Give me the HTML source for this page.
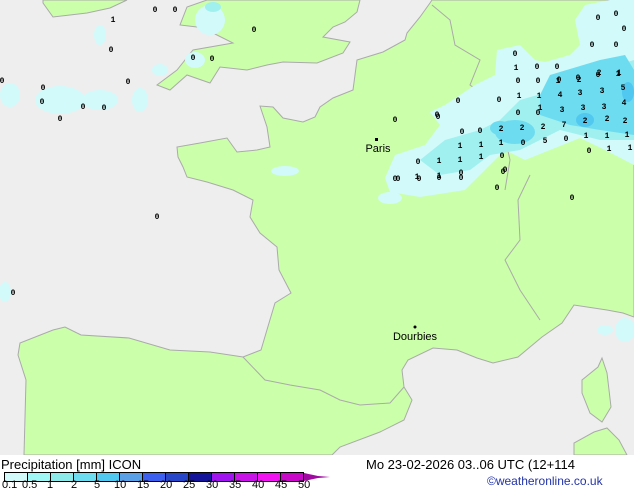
<!DOCTYPE html>
<html><head><meta charset="utf-8"><style>
html,body{margin:0;padding:0;background:#fff;width:634px;height:490px;overflow:hidden;font-family:"Liberation Sans",sans-serif}
.lg{position:absolute;font-size:13px;color:#000;white-space:nowrap}
</style></head><body>
<svg width="634" height="455" style="position:absolute;left:0;top:0" xmlns="http://www.w3.org/2000/svg">
<rect width="634" height="455" fill="#eeeeee"/>
<g fill="#ccffaa" stroke="#aaaaaa" stroke-width="1">
<polygon points="43,0 127,0 110,8 87,13 53,17 43,3"/>
<polygon points="207,0 360,0 357,12 345,22 333,27 323,37 350,42 343,53 317,63 283,62 267,65 247,70 220,67 210,83 187,75 170,90 157,85 177,70 193,50 233,43 213,33 197,27 180,25 187,7"/>
<polygon points="432,0 634,0 634,317 623,313 607,310 574,305 562,323 542,337 518,357 493,363 477,358 457,350 433,348 408,360 402,370 404,387 412,400 404,420 380,432 340,447 332,455 24,455 26,380 18,355 20,343 53,330 65,327 81,335 129,338 170,350 210,352 243,357 261,350 269,323 275,303 291,293 279,270 277,247 260,233 250,217 253,200 233,190 207,182 187,177 183,167 178,157 177,147 200,143 227,138 237,152 257,150 270,147 267,127 260,106 273,107 283,118 303,122 315,117 320,107 333,98 353,90 357,60 383,52 405,40 407,33 420,17 430,3"/>
<polygon points="602,358 607,373 611,407 602,422 590,413 582,393 582,380 598,367"/>
<polygon points="607,428 619,440 627,455 574,455 574,443 594,432"/>
</g>
<g fill="none" stroke="#aaaaaa" stroke-width="1">
<polyline points="432,5 450,20 455,45 480,60 470,85 490,100 500,115 510,160 505,190"/>
<polyline points="243,357 265,380 290,385 320,390 340,400 360,405 390,403 404,387"/>
<polyline points="530,175 518,200 520,240 505,260 520,290 540,320"/>
<polyline points="440,110 470,105 500,120 520,155"/>
</g>
<g fill="#d2fafa">
<polygon points="385,178 395,155 425,145 440,125 430,112 445,105 460,95 475,85 495,75 497,50 520,45 535,60 545,62 570,55 580,45 575,20 585,5 610,0 634,0 634,165 605,150 580,138 550,150 525,160 505,150 490,165 465,190 420,197 390,192"/>
<ellipse cx="285" cy="171" rx="14" ry="5"/><ellipse cx="390" cy="198" rx="12" ry="6"/>
<ellipse cx="100" cy="35" rx="6" ry="10"/><ellipse cx="60" cy="100" rx="25" ry="14"/><ellipse cx="100" cy="100" rx="18" ry="10"/><ellipse cx="10" cy="95" rx="10" ry="12"/><ellipse cx="140" cy="100" rx="8" ry="12"/><ellipse cx="210" cy="20" rx="15" ry="15"/><ellipse cx="195" cy="60" rx="10" ry="8"/><ellipse cx="160" cy="70" rx="8" ry="6"/><ellipse cx="5" cy="292" rx="6" ry="10"/><ellipse cx="625" cy="330" rx="10" ry="12"/><ellipse cx="605" cy="330" rx="8" ry="5"/>
</g>
<g fill="#a0f0f0">
<polygon points="420,160 445,140 480,130 500,120 520,100 555,90 600,70 634,60 634,140 600,140 560,130 520,150 490,155 470,170 440,175"/>
<ellipse cx="213" cy="7" rx="8" ry="5"/>
</g>
<g fill="#6edcf0">
<polygon points="550,75 600,60 625,55 634,70 634,135 600,130 570,125 540,115 540,95"/>
<ellipse cx="515" cy="132" rx="20" ry="12"/><ellipse cx="500" cy="128" rx="10" ry="7"/>
</g>
<g fill="#50c8f0"><ellipse cx="585" cy="120" rx="9" ry="7"/><ellipse cx="628" cy="92" rx="6" ry="10"/></g>
<g font-family="Liberation Mono,monospace" font-size="8" font-weight="bold" fill="#000" text-anchor="middle">
<text x="113" y="22">1</text><text x="155" y="12">0</text><text x="175" y="12">0</text><text x="111" y="52">0</text><text x="193" y="60">0</text><text x="212" y="61">0</text><text x="254" y="32">0</text><text x="2" y="83">0</text><text x="43" y="90">0</text><text x="42" y="104">0</text><text x="128" y="84">0</text><text x="83" y="109">0</text><text x="104" y="110">0</text><text x="60" y="121">0</text><text x="157" y="219">0</text><text x="13" y="295">0</text>
<text x="395" y="122">0</text><text x="437" y="117">0</text><text x="395" y="181">0</text><text x="438" y="119">0</text><text x="458" y="103">0</text><text x="515" y="56">0</text><text x="516" y="70">1</text><text x="537" y="69">0</text><text x="557" y="69">0</text><text x="598" y="20">0</text><text x="616" y="16">0</text><text x="592" y="47">0</text><text x="616" y="47">0</text><text x="624" y="31">0</text>
<text x="518" y="83">0</text><text x="538" y="83">0</text><text x="558" y="83">1</text><text x="578" y="80">0</text><text x="598" y="77">0</text><text x="618" y="76">1</text>
<text x="499" y="102">0</text><text x="519" y="98">1</text><text x="539" y="98">1</text><text x="559" y="82">0</text><text x="579" y="82">2</text><text x="599" y="75">2</text><text x="619" y="75">1</text>
<text x="518" y="115">0</text><text x="538" y="115">0</text><text x="560" y="97">4</text><text x="580" y="95">3</text><text x="602" y="93">3</text><text x="623" y="90">5</text>
<text x="540" y="110">1</text><text x="562" y="112">3</text><text x="583" y="110">3</text><text x="604" y="109">3</text><text x="624" y="105">4</text>
<text x="462" y="134">0</text><text x="480" y="133">0</text><text x="501" y="131">2</text><text x="522" y="130">2</text><text x="543" y="129">2</text><text x="564" y="127">7</text><text x="585" y="123">2</text><text x="607" y="121">2</text><text x="625" y="123">2</text>
<text x="460" y="148">1</text><text x="481" y="147">1</text><text x="501" y="145">1</text><text x="523" y="145">0</text><text x="545" y="143">5</text><text x="566" y="141">0</text><text x="586" y="138">1</text><text x="607" y="138">1</text><text x="627" y="137">1</text>
<text x="418" y="164">0</text><text x="439" y="163">1</text><text x="460" y="162">1</text><text x="481" y="159">1</text><text x="502" y="158">0</text><text x="589" y="153">0</text><text x="609" y="151">1</text><text x="630" y="150">1</text>
<text x="417" y="179">1</text><text x="439" y="178">1</text><text x="461" y="175">0</text><text x="503" y="174">0</text>
<text x="398" y="181">0</text><text x="419" y="181">0</text><text x="439" y="180">0</text><text x="461" y="180">0</text><text x="505" y="172">0</text>
<text x="497" y="190">0</text><text x="572" y="200">0</text>
</g>
<rect x="375" y="138" width="3" height="3" fill="#000"/>
<text x="378" y="152" font-family="Liberation Sans,sans-serif" font-size="11" fill="#000" text-anchor="middle">Paris</text>
<circle cx="415" cy="327" r="1.5" fill="#000"/>
<text x="415" y="340" font-family="Liberation Sans,sans-serif" font-size="11" fill="#000" text-anchor="middle">Dourbies</text>
</svg>
<div class="lg" style="left:1px;top:457px">Precipitation [mm] ICON</div>
<div class="lg" style="left:366px;top:457px">Mo 23-02-2026 03..06 UTC (12+114</div>
<svg width="340" height="12" style="position:absolute;left:0;top:472px" xmlns="http://www.w3.org/2000/svg">
<g stroke="#000" stroke-width="1">
<rect x="4.5" y="0.5" width="23" height="9" fill="#d2fafa"/>
<rect x="27.5" y="0.5" width="23" height="9" fill="#a0f5f5"/>
<rect x="50.5" y="0.5" width="23" height="9" fill="#8ceaea"/>
<rect x="73.5" y="0.5" width="23" height="9" fill="#6edcf0"/>
<rect x="96.5" y="0.5" width="23" height="9" fill="#50c8f0"/>
<rect x="119.5" y="0.5" width="23" height="9" fill="#5aa0e6"/>
<rect x="142.5" y="0.5" width="23" height="9" fill="#3c5ff0"/>
<rect x="165.5" y="0.5" width="23" height="9" fill="#2846c8"/>
<rect x="188.5" y="0.5" width="23" height="9" fill="#14149b"/>
<rect x="211.5" y="0.5" width="23" height="9" fill="#a014f0"/>
<rect x="234.5" y="0.5" width="23" height="9" fill="#c814e6"/>
<rect x="257.5" y="0.5" width="23" height="9" fill="#f014f0"/>
<rect x="280.5" y="0.5" width="23" height="9" fill="#c80ac8"/>
</g>
<polygon points="304,1 318,4 330,5 318,6 304,9" fill="#a00aa0"/>
</svg>
<div style="position:absolute;left:0;top:479px;font-size:11px;white-space:nowrap;height:12px">
<span style="position:absolute;left:2px">0.1</span><span style="position:absolute;left:22px">0.5</span><span style="position:absolute;left:47px">1</span><span style="position:absolute;left:71px">2</span><span style="position:absolute;left:94px">5</span><span style="position:absolute;left:114px">10</span><span style="position:absolute;left:137px">15</span><span style="position:absolute;left:160px">20</span><span style="position:absolute;left:183px">25</span><span style="position:absolute;left:206px">30</span><span style="position:absolute;left:229px">35</span><span style="position:absolute;left:252px">40</span><span style="position:absolute;left:275px">45</span><span style="position:absolute;left:298px">50</span>
</div>
<div style="position:absolute;left:487px;top:474px;font-size:12px;color:#2233aa;white-space:nowrap">©weatheronline.co.uk</div>
</body></html>
